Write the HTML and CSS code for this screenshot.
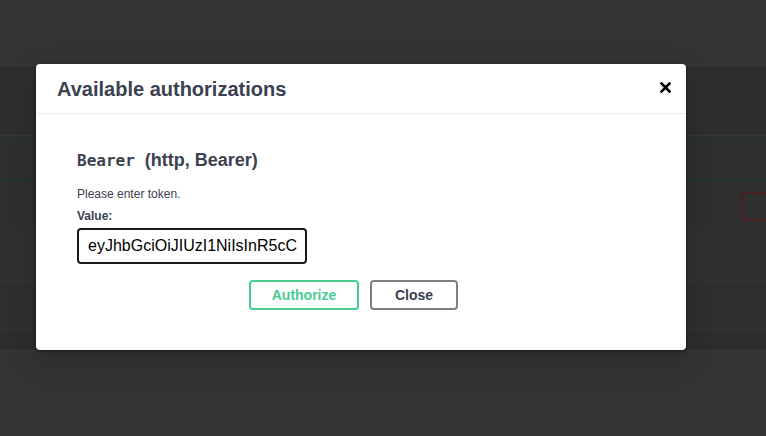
FILE: index.html
```html
<!DOCTYPE html>
<html>
<head>
<meta charset="utf-8">
<link rel="stylesheet" href="styles.css">
</head>
<body>
<div class="page">
  <div class="bg-top"></div>
  <div class="bg-info"></div>
  <div class="bg-gap"></div>
  <div class="bg-tag"></div>
  <div class="bg-row bg-row-auth"><span class="bg-btn"></span></div>
  <div class="bg-row bg-row-a"></div>
  <div class="bg-row bg-row-b"></div>
  <div class="bg-row bg-row-c"></div>
  <div class="bg-bottom"></div>
</div>

<div class="modal">
  <div class="modal-header">
    <h3 class="modal-title">Available authorizations</h3>
    <button class="close-modal" aria-label="Close">
      <svg width="11" height="11" viewBox="0 0 11 11"><path d="M1.5 1.5 L9.5 9.5 M9.5 1.5 L1.5 9.5" stroke="#000" stroke-width="2.6" stroke-linecap="square"/></svg>
    </button>
  </div>
  <div class="modal-body">
    <h4 class="scheme"><code class="scheme-name">Bearer</code>&nbsp; (http, Bearer)</h4>
    <p class="hint">Please enter token.</p>
    <label class="value-label">Value:</label>
    <div class="input">eyJhbGciOiJIUzI1NiIsInR5cC</div>
    <div class="actions">
      <button class="btn btn-authorize">Authorize</button>
      <button class="btn btn-close">Close</button>
    </div>
  </div>
</div>
</body>
</html>
```

FILE: styles.css
```css
* { box-sizing: border-box; }
html, body { margin: 0; padding: 0; }
body {
  width: 766px;
  height: 436px;
  overflow: hidden;
  background: #333333;
  font-family: "Liberation Sans", Arial, sans-serif;
  position: relative;
}

.page { display: flex; flex-direction: column; }
.bg-top { height: 66px; background: #333333; border-bottom: 1px solid #3a3a3a; }
.bg-info { height: 70px; background: #2e2e2e; border-bottom: 1px solid #383838; }
.bg-gap { height: 6px; background: #303030; border-bottom: 1px solid #19352a; }
.bg-tag { height: 39px; background: #2f2f2f; border-bottom: 1px solid #19352a; }
.bg-row { position: relative; background: #2f2f2f; border-bottom: 1px solid #343434; }
.bg-row-auth { height: 51px; }
.bg-row-a { height: 50px; background: #303030; }
.bg-row-b { height: 50px; background: #2f2f2f; }
.bg-row-c { height: 19px; background: #2d2d2d; border-bottom: 1px solid #383838; }
.bg-bottom { flex: 1; height: 90px; background: #333333; }
.bg-btn {
  position: absolute;
  left: 741px; top: 11px;
  width: 40px; height: 29px;
  border: 2px solid #4b1f22;
  border-radius: 4px;
}

.modal {
  position: absolute;
  left: 36px; top: 64px;
  width: 650px;
  height: 286px;
  background: #fff;
  border-radius: 4px;
  box-shadow: 0 1px 3px rgba(0,0,0,.5), 0 10px 30px -2px rgba(0,0,0,.2);
}
.modal-header {
  height: 50px;
  display: flex;
  align-items: center;
  justify-content: space-between;
  padding: 0 15px 0 21px;
  border-bottom: 1px solid #ebebeb;
}
.modal-title {
  margin: 0;
  font-size: 20px;
  font-weight: 700;
  color: #3b4151;
  padding-top: 1px;
}
.close-modal {
  background: none;
  border: 0;
  padding: 0;
  width: 11px;
  height: 11px;
  margin-top: -3px;
  display: flex;
}
.modal-body {
  padding: 35px 41px 0 41px;
}
.scheme {
  margin: 0;
  font-size: 18px;
  line-height: 22px;
  font-weight: 700;
  color: #3b4151;
}
.scheme-name {
  font-family: "DejaVu Sans Mono", "Liberation Mono", monospace;
  font-size: 16px;
  font-weight: 700;
}
.hint {
  margin: 15px 0 0;
  font-size: 12px;
  line-height: 15px;
  color: #3b4151;
}
.value-label {
  display: block;
  margin-top: 7px;
  font-size: 12px;
  line-height: 15px;
  font-weight: 700;
  color: #3b4151;
}
.input {
  margin-top: 4px;
  width: 230px;
  height: 36px;
  border: 2px solid #1a1a1a;
  border-radius: 4px;
  padding: 0 9px;
  font-size: 16px;
  line-height: 32px;
  color: #000;
  white-space: nowrap;
  overflow: hidden;
}
.actions {
  display: flex;
  justify-content: center;
  gap: 11px;
  margin-top: 16px;
  padding-right: 15px;
}
.btn {
  height: 30px;
  border-radius: 4px;
  background: #fff;
  font-family: "Liberation Sans", Arial, sans-serif;
  font-size: 14px;
  font-weight: 700;
  padding: 0;
}
.btn-authorize {
  width: 110px;
  border: 2px solid #49cc90;
  color: #49cc90;
}
.btn-close {
  width: 88px;
  border: 2px solid #808080;
  color: #3b4151;
}
```
